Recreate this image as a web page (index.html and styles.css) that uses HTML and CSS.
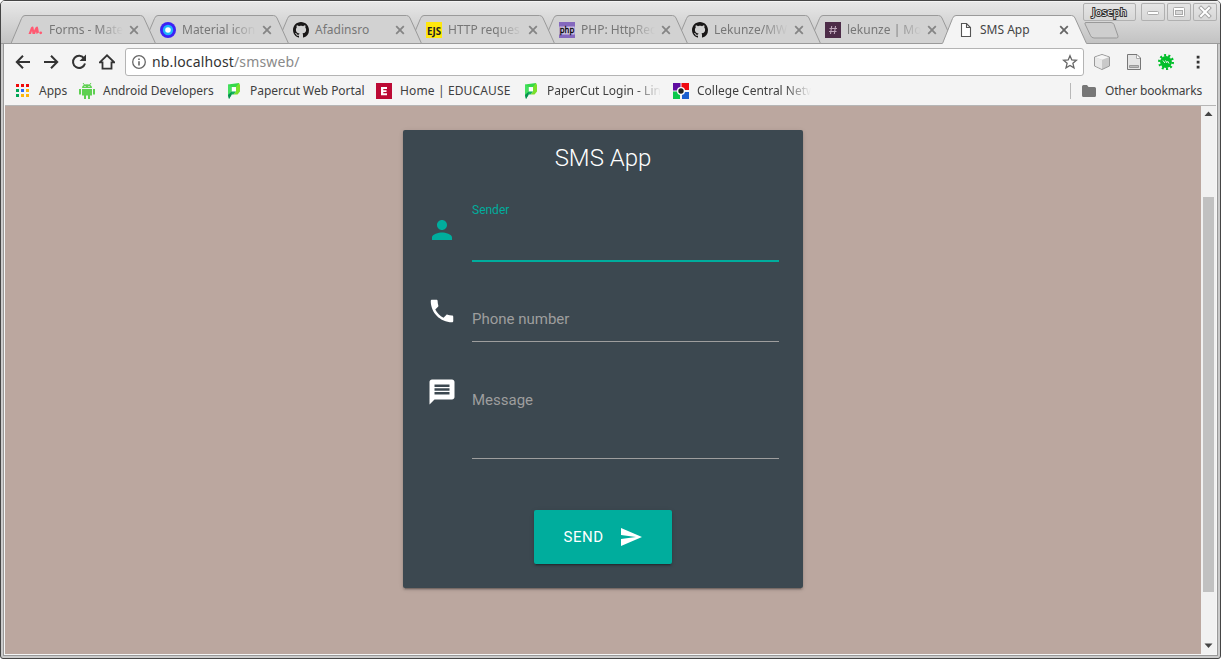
FILE: index.html
```html
<!DOCTYPE html>
<html lang="en">
<head>
<meta charset="utf-8">
<title>SMS App</title>
<link rel="stylesheet" href="styles.css">
</head>
<body>
<svg class="defs" width="0" height="0">
  <defs>
    <symbol id="tab" viewBox="0 0 146 29">
      <path d="M0 28.500L10.500 3.500Q11.500 .5 14 .5H129.500Q132 .5 133 3L144.500 28.500Z" fill="#d2d2d2" stroke="#9a9a9a"/>
    </symbol>
    <symbol id="tab-active" viewBox="0 0 146 29">
      <path d="M0 29L1 27.500 10.500 3.500Q11.500 .5 14 .5H129.500Q132 .5 133 3L144.500 28.500V29Z" fill="#f4f4f4"/>
      <path d="M.5 28.500L10.500 3.500Q11.500 .5 14 .5H129.500Q132 .5 133 3L144.500 28.500" fill="none" stroke="#9a9a9a"/>
    </symbol>
    <symbol id="close" viewBox="0 0 10 10">
      <path d="M1.200 1.200l7.600 7.600M8.800 1.200L1.200 8.800" fill="none" stroke="currentColor" stroke-width="1.800"/>
    </symbol>
    <symbol id="github" viewBox="0 0 16 16">
      <path fill="#191717" d="M8 0C3.580 0 0 3.580 0 8c0 3.540 2.290 6.530 5.470 7.590.4.070.55-.17.55-.38 0-.19-.01-.82-.01-1.490-2.010.37-2.530-.49-2.690-.94-.09-.23-.48-.94-.82-1.130-.28-.15-.68-.52-.01-.53.63-.01 1.080.58 1.230.82.72 1.210 1.870.87 2.330.66.070-.52.28-.87.51-1.070-1.780-.2-3.640-.89-3.640-3.950 0-.87.31-1.590.82-2.150-.08-.2-.36-1.020.080-2.120 0 0 .67-.21 2.200.82.640-.18 1.320-.27 2-.27s1.360.090 2 .27c1.530-1.040 2.200-.82 2.200-.82.440 1.100.16 1.920.080 2.120.51.560.82 1.270.82 2.150 0 3.070-1.870 3.750-3.650 3.950.29.250.54.730.54 1.480 0 1.070-.01 1.930-.01 2.200 0 .21.150.46.550.38A8.010 8.010 0 0 0 16 8c0-4.420-3.580-8-8-8z"/>
    </symbol>
    <symbol id="papercut" viewBox="0 0 14 16">
      <path d="M1 1.500L12 0V4L9 4H4.500V8.500L1 12Z" fill="#35d94a"/>
      <path d="M9 4L12 0 13 2V8.500L10.500 11.500H6.500L9 8.500Z" fill="#7be02a"/>
      <path d="M1 1.500L4.500 4V8.500L1 12Z" fill="#45e060"/>
      <path d="M1 12L4.500 8.500H9L6.500 11.500H4.500L2 16Z" fill="#12b45a"/>
      <path d="M1 12L4.500 9 4.500 12 2 16Z" fill="#07924e"/>
      <path d="M5 4.500H9V8H5Z" fill="#fff"/>
    </symbol>
  </defs>
</svg>

<div class="window">
  <header class="titlebar">
    <div class="tabs">
      <div class="tab">
        <svg class="shape"><use href="#tab"/></svg>
        <svg class="fav" viewBox="0 0 16 16"><path d="M1.500 12L4 5.500Q6 3.500 6.500 5.500L7 8.500 8.500 5.500Q10.500 3.500 11 5.500L12 10.500 9.500 12 9 9.500 8 12H5.500L5 9 4 12Z" fill="#ff5a72"/><circle cx="13.700" cy="10.800" r="1.400" fill="#ff5a72"/></svg>
        <span class="name">Forms - Mate</span>
        <svg class="x"><use href="#close"/></svg>
      </div>
      <div class="tab">
        <svg class="shape"><use href="#tab"/></svg>
        <svg class="fav" viewBox="0 0 16 16"><circle cx="8" cy="8" r="8" fill="#3d22f5"/><circle cx="8" cy="8" r="5.200" fill="#1fb5fb"/><circle cx="8" cy="8" r="2.800" fill="#fff"/></svg>
        <span class="name">Material icon</span>
        <svg class="x"><use href="#close"/></svg>
      </div>
      <div class="tab">
        <svg class="shape"><use href="#tab"/></svg>
        <svg class="fav"><use href="#github"/></svg>
        <span class="name">Afadinsro</span>
        <svg class="x"><use href="#close"/></svg>
      </div>
      <div class="tab">
        <svg class="shape"><use href="#tab"/></svg>
        <svg class="fav" viewBox="0 0 16 16"><path d="M0 0H16V16H0Z" fill="#ffe70d"/><text class="ejs" x="1" y="12.500" textLength="14" lengthAdjust="spacingAndGlyphs">EJS</text></svg>
        <span class="name">HTTP reques</span>
        <svg class="x"><use href="#close"/></svg>
      </div>
      <div class="tab">
        <svg class="shape"><use href="#tab"/></svg>
        <svg class="fav" viewBox="0 0 16 16"><path d="M0 0H16V16H0Z" fill="#8468bd"/><path d="M.3 4.500H15.700V12.500H.3Z" fill="#fff" opacity=".6"/><text class="php" x=".8" y="10.800" textLength="14.400" lengthAdjust="spacingAndGlyphs">php</text></svg>
        <span class="name">PHP: HttpRec</span>
        <svg class="x"><use href="#close"/></svg>
      </div>
      <div class="tab">
        <svg class="shape"><use href="#tab"/></svg>
        <svg class="fav"><use href="#github"/></svg>
        <span class="name">Lekunze/MW</span>
        <svg class="x"><use href="#close"/></svg>
      </div>
      <div class="tab">
        <svg class="shape"><use href="#tab"/></svg>
        <svg class="fav" viewBox="0 0 16 16"><path d="M0 0H16V16H0Z" fill="#4d2c48"/><path d="M6.700 4L5.500 12M10.500 4L9.300 12M4.500 6.500H12M4 9.500H11.500" stroke="#bda5b9" stroke-width="1.100"/></svg>
        <span class="name">lekunze | Mo</span>
        <svg class="x"><use href="#close"/></svg>
      </div>
      <div class="tab active">
        <svg class="shape"><use href="#tab-active"/></svg>
        <svg class="fav" viewBox="0 0 16 16"><path d="M3.500 1.500H8.500L12.500 5.500V14.500H3.500ZM8.500 1.500V5.500H12.500" fill="#fff" stroke="#555" stroke-width="1.100"/></svg>
        <span class="name">SMS App</span>
        <svg class="x"><use href="#close"/></svg>
      </div>
    </div>
    <svg class="newtab" viewBox="0 0 36 18"><path d="M2 .5H27Q29 .5 30 2.500L34 14Q34.500 16 32.500 16H10Q7.500 16 6.500 13.500L1 2Q.5.500 2 .5Z" fill="#cecece" stroke="#999"/></svg>
    <div class="controls">
      <span class="user">Joseph</span>
      <svg class="wbtn" viewBox="0 0 24 18"><rect x="6.500" y="8.500" width="11" height="3" rx="1" fill="#fff" stroke="#aaa"/></svg>
      <svg class="wbtn" viewBox="0 0 24 18"><rect x="6.500" y="4.500" width="11" height="9" rx="1" fill="#fff" stroke="#aaa"/><rect x="8.500" y="7.500" width="7" height="4" fill="#d8d8d8" stroke="#aaa"/></svg>
      <svg class="wbtn" viewBox="0 0 24 18"><path d="M8 5L16 13M16 5L8 13" stroke="#a5a5a5" stroke-width="4" stroke-linecap="square"/><path d="M8 5L16 13M16 5L8 13" stroke="#fff" stroke-width="2" stroke-linecap="square"/></svg>
    </div>
  </header>

  <div class="client">
    <div class="toolbar">
      <svg class="nav" viewBox="0 0 16 16"><path d="M15 8H2M8 1.800L1.800 8L8 14.200" fill="none" stroke="#333" stroke-width="2"/></svg>
      <svg class="nav" viewBox="0 0 16 16"><path d="M1 8H14M8 1.800L14.200 8L8 14.200" fill="none" stroke="#333" stroke-width="2"/></svg>
      <svg class="nav" viewBox="0 0 16 16"><path d="M13.200 4.500A6.100 6.100 0 1 0 14 9.500" fill="none" stroke="#333" stroke-width="2"/><path d="M15 .5V7H8.500Z" fill="#333"/></svg>
      <svg class="nav" viewBox="0 0 16 16"><path d="M.8 8.300L8 1.300L15.200 8.300H12.500V14.700H3.500V8.300Z" fill="none" stroke="#333" stroke-width="1.800"/></svg>
      <div class="omnibox">
        <svg class="info" viewBox="0 0 14 14"><circle cx="7" cy="7" r="6.300" fill="none" stroke="#666" stroke-width="1.300"/><path d="M6.200 6.200H7.800V10.500H6.200ZM6.200 3.500H7.800V5H6.200Z" fill="#666"/></svg>
        <span class="url">nb.localhost<span class="path">/smsweb/</span></span>
        <svg class="star" viewBox="0 0 16 16"><path d="M8 1.700L9.800 6L14.400 6.300L10.900 9.300L12 13.900L8 11.400L4 13.900L5.100 9.300L1.600 6.300L6.200 6Z" fill="none" stroke="#666" stroke-width="1.300"/></svg>
      </div>
      <div class="extensions">
        <svg viewBox="0 0 16 16"><path d="M8 .5L15.500 3V12L8 15.500L.5 12V3Z" fill="#c9c9c9" stroke="#999"/><path d="M1 3.300L8 6V15L1 11.700Z" fill="#e8e8e8"/><path d="M1.200 3.200L8 1L14.800 3.200L8 5.800Z" fill="#f6f6f6"/></svg>
        <svg viewBox="0 0 16 16"><path d="M1.500.5H11L14.500 4V15.500H1.500Z" fill="#e5e5e5" stroke="#777"/><path d="M10.500 1V4.500H14" fill="#fff" stroke="#aaa"/><path d="M3.500 11.500H12.500V13.500H3.500Z" fill="#bbb" stroke="#999"/></svg>
        <svg viewBox="0 0 16 16"><circle cx="8" cy="8" r="6.700" fill="none" stroke="#02bf2b" stroke-width="2.600" stroke-dasharray="2 2.210"/><circle cx="8" cy="8" r="5.900" fill="#02bf2b"/><path d="M5 6.500L7 9M7.500 6.500L9 9M9.500 7L11 9.500" stroke="#f4f4f4" stroke-width="1"/></svg>
        <svg viewBox="0 0 16 16"><path d="M6.700 1.800h2.800v2.800H6.700zM6.700 6.800h2.800v2.800H6.700zM6.700 11.800h2.800v2.800H6.700z" fill="#333"/></svg>
      </div>
    </div>

    <nav class="bookmarks">
      <a class="bm apps"><svg viewBox="0 0 16 16"><path d="M1 1h3v3H1zM6 1h3v3h-3zM11 1h3v3h-3z" fill="#f00a0a"/><path d="M1 6h3v3H1zM1 11h3v3H1z" fill="#00a657"/><path d="M6 6h3v3h-3z" fill="#2a6af5"/><path d="M11 6h3v3h-3zM6 11h3v3h-3zM11 11h3v3h-3z" fill="#fdb60a"/></svg><span>Apps</span></a>
      <a class="bm android"><svg viewBox="0 0 16 16"><path d="M3 5C3 2.500 5 1.300 8 1.300S13 2.500 13 5ZM3 6H13V12.500H11V16H9V12.500H7V16H5V12.500H3ZM0 6H2V11.500H0ZM14 6H16V11.500H14Z" fill="#5fd052"/><path d="M4 0L5.500 2M12 0L10.500 2" stroke="#5fd052"/><path d="M5.500 3h1v1h-1zM9.500 3h1v1h-1z" fill="#fff"/></svg><span>Android Developers</span></a>
      <a class="bm portal"><svg><use href="#papercut"/></svg><span>Papercut Web Portal</span></a>
      <a class="bm educause"><svg viewBox="0 0 16 16"><path d="M0 0H16V16H0Z" fill="#bc0a35"/><path d="M5 4H11V6H7.300V7.200H10.500V9H7.300V10.300H11V12.300H5Z" fill="#fff"/></svg><span>Home | EDUCAUSE</span></a>
      <a class="bm login"><svg><use href="#papercut"/></svg><span class="fade">PaperCut Login - Linu</span></a>
      <a class="bm college"><svg viewBox="0 0 16 16"><path d="M0 0H7.500V7.500H0Z" fill="#5f0ca0"/><path d="M8.500 0H16V7H8.500Z" fill="#f00a12"/><path d="M0 8.500H7V16H0Z" fill="#0ac84a"/><path d="M9 9H16V16H9Z" fill="#1a5fd0"/><circle cx="8" cy="8" r="4" fill="#fff"/><circle cx="8" cy="8" r="2.700" fill="#222"/></svg><span class="fade">College Central Netw</span></a>
      <a class="bm other"><svg viewBox="0 0 16 16"><path d="M1 3.500Q1 2 2.500 2H6L7.500 4H13.500Q15 4 15 5.500V12.500Q15 14 13.500 14H2.500Q1 14 1 12.500Z" fill="#777"/></svg><span>Other bookmarks</span></a>
    </nav>

    <div class="viewport">
      <main class="page">
        <form class="card">
          <h1 class="title">SMS App</h1>
          <div class="row sender">
            <svg class="prefix" viewBox="0 0 24 24"><path fill="currentColor" d="M12 12c2.210 0 4-1.790 4-4s-1.790-4-4-4-4 1.790-4 4 1.790 4 4 4zm0 2c-2.670 0-8 1.340-8 4v2h16v-2c0-2.660-5.330-4-8-4z"/></svg>
            <label class="field">Sender</label>
          </div>
          <div class="row phone">
            <svg class="prefix" viewBox="0 0 24 24"><path fill="currentColor" d="M6.620 10.790c1.440 2.830 3.760 5.140 6.590 6.590l2.200-2.200c.27-.27.67-.36 1.020-.24 1.120.37 2.330.57 3.570.57.550 0 1 .45 1 1V20c0 .55-.45 1-1 1-9.390 0-17-7.610-17-17 0-.55.45-1 1-1h3.500c.55 0 1 .45 1 1 0 1.250.2 2.450.57 3.570.11.35.030.74-.25 1.020l-2.200 2.200z"/></svg>
            <label class="field">Phone number</label>
          </div>
          <div class="row message">
            <svg class="prefix" viewBox="0 0 24 24"><path fill="currentColor" d="M20 2H4c-1.100 0-1.990.9-1.990 2L2 22l4-4h14c1.100 0 2-.9 2-2V4c0-1.100-.9-2-2-2zm-2 12H6v-2h12v2zm0-3H6V9h12v2zm0-3H6V6h12v2z"/></svg>
            <label class="field">Message</label>
          </div>
          <button class="send" type="button">SEND<svg viewBox="0 0 24 24"><path fill="currentColor" d="M2.010 21L23 12 2.010 3 2 10l15 2-15 2z"/></svg></button>
        </form>
      </main>
      <div class="scrollbar">
        <svg viewBox="0 0 15 17"><path d="M3.500 10L7.500 5.500L11.500 10Z" fill="#444"/></svg>
        <div class="track"><div class="thumb"></div></div>
        <svg viewBox="0 0 15 17"><path d="M3.500 6.500L7.500 11L11.500 6.500Z" fill="#444"/></svg>
      </div>
    </div>
  </div>
</div>
</body>
</html>
```

FILE: styles.css
```css
* { box-sizing: border-box; }
body { margin: 0; background: #fff; font-family: "Noto Sans", sans-serif; font-size: 12px; color: #444; overflow: hidden; }
svg { display: block; flex: none; }
.defs { position: absolute; }

.window {
  width: 1221px; height: 659px; display: flex; flex-direction: column;
  border: 1px solid #454545; border-radius: 5px 5px 3px 3px; overflow: hidden;
  background: #cbcbcb;
}

/* title bar and tabs */
.titlebar {
  height: 43px; flex: none; display: flex; padding-left: 10px;
  background: linear-gradient(#e8e8e8, #c2c2c2);
  box-shadow: inset 0 1px #f4f4f4, inset 0 -1px #9a9a9a;
}
.tabs { display: flex; padding-top: 14px; isolation: isolate; }
.tab {
  position: relative; width: 146px; height: 29px; margin-right: -13px;
  display: flex; align-items: center; padding: 0 0 0 16px; color: #777; white-space: nowrap;
}
.tab:nth-child(1) { z-index: 8; }
.tab:nth-child(2) { z-index: 7; }
.tab:nth-child(3) { z-index: 6; }
.tab:nth-child(4) { z-index: 5; }
.tab:nth-child(5) { z-index: 4; }
.tab:nth-child(6) { z-index: 3; }
.tab:nth-child(7) { z-index: 2; }
.tab.active { z-index: 9; color: #444; }
.shape { position: absolute; inset: 0; width: 146px; height: 29px; z-index: -1; }
.fav { width: 16px; height: 16px; margin-top: 1px; overflow: visible; }
.name {
  width: 74px; margin: 0 6px 0 6px; line-height: 18px;
  -webkit-mask-image: linear-gradient(90deg, #000 48px, transparent 74px);
  mask-image: linear-gradient(90deg, #000 48px, transparent 74px);
}
.tab:nth-child(3) .name, .active .name { -webkit-mask-image: none; mask-image: none; }
.x { width: 10px; height: 10px; margin-top: 1px; color: #858585; }
.active .x { color: #666; margin-left: -1px; }
.ejs { font: bold 11px "Open Sans", sans-serif; fill: #222; }
.php { font: 9px "DejaVu Sans", sans-serif; fill: #000; stroke: #000; stroke-width: .3px; }
.newtab { width: 36px; height: 18px; margin: 21px 0 0 9px; }
.controls { display: flex; gap: 2px; height: 19px; margin: 2px 0 0 -37px; position: relative; }
.user {
  width: 53px; height: 18px; margin-right: 3px; border: 1px solid #b0b0b0; border-radius: 2px;
  text-align: center; line-height: 16px; font-size: 11px; color: #eee;
  -webkit-text-stroke: 2px #333; paint-order: stroke fill;
}
.wbtn { width: 24px; height: 18px; border-radius: 2px; box-shadow: inset 0 0 0 1px #b0b0b0; }

/* browser chrome */
.client {
  flex: 1; min-height: 0; margin: 0 2px 2px; display: flex; flex-direction: column;
  border: 1px solid #999; border-top: 0; padding: 0 1px 1px; background: #f6f6f6;
}
.toolbar { height: 34px; flex: none; display: flex; align-items: center; padding: 0 9px 0 10px; gap: 12px; background: #f4f4f4; }
.nav { width: 16px; height: 16px; margin-top: 1px; }
.omnibox {
  width: 959px; height: 28px; margin: 2px 0 0 -2px; display: flex; align-items: center;
  padding: 0 5px 0 6px; border: 1px solid #b4b4b4; border-radius: 3px; background: #fff;
}
.info { width: 14px; height: 14px; }
.url { flex: 1; margin-left: 6px; font-size: 14px; letter-spacing: .15px; color: #333; line-height: 20px; margin-top: -1px; }
.path { color: #8a8a8a; }
.star { width: 16px; height: 16px; }
.extensions { display: flex; gap: 16px; margin: 1px 0 0 -2px; }
.extensions svg { width: 16px; height: 16px; }
.bookmarks { height: 28px; flex: none; display: flex; align-items: center; background: #f4f4f4; border-bottom: 1px solid #b6b6b6; padding: 0 14px 1px 10px; color: #3f3f3f; }
.bm { display: flex; align-items: center; gap: 8px; white-space: nowrap; line-height: 18px; }
.bm svg { width: 16px; height: 16px; }
.apps { width: 64px; }
.android { width: 147px; letter-spacing: -.04px; }
.portal { width: 150px; letter-spacing: -.04px; }
.educause { width: 147px; letter-spacing: .13px; }
.login { width: 150px; }
.college { width: 137px; }
.fade { flex: 0 0 116px; -webkit-mask-image: linear-gradient(90deg, #000 88px, transparent 114px); mask-image: linear-gradient(90deg, #000 88px, transparent 114px); }
.other { margin-left: auto; border-left: 1px solid #b8b8b8; padding-left: 10px; height: 16px; letter-spacing: -.15px; }

/* page */
.viewport { flex: 1; min-height: 0; display: flex; }
.page { flex: 1; background: #bba79f; padding-top: 24px; padding-left: 398px; font-family: Roboto, sans-serif; }
.card {
  width: 400px; height: 458px; background: #3c4850; border-radius: 2px; padding: 0 24px; color: #fff;
  display: flex; flex-direction: column;
  box-shadow: 0 2px 2px rgba(0,0,0,.14), 0 1px 5px rgba(0,0,0,.12), 0 3px 1px -2px rgba(0,0,0,.2);
}
.title { margin: 0; height: 70px; padding-top: 13px; text-align: center; font-size: 24px; line-height: 30px; font-weight: 300; }
.row { display: flex; gap: 15px; }
.prefix { width: 30px; height: 30px; margin-top: 15px; }
.field { width: 307px; border-bottom: 1px solid #9e9e9e; color: #9e9e9e; font-size: 15px; line-height: 20px; }
.sender { height: 62px; color: #00ad9d; }
.sender .field { color: inherit; border-bottom: 2px solid #00ad9d; font-size: 12px; }
.phone { height: 61px; margin-top: 19px; }
.phone .field { padding-top: 28px; }
.message { height: 98px; margin-top: 19px; }
.message .prefix { margin-top: 15.5px; }
.message .field { padding-top: 29px; }
.send {
  width: 138px; height: 54px; margin: 51px 0 0 107px; padding: 0 0 0 1px;
  display: flex; align-items: center; justify-content: center; gap: 16px;
  border: 0; border-radius: 2px; background: #00ad9d; color: #fff;
  font: 15px Roboto, sans-serif; letter-spacing: .5px;
  box-shadow: 0 2px 2px rgba(0,0,0,.14), 0 1px 5px rgba(0,0,0,.12), 0 3px 1px -2px rgba(0,0,0,.2);
}
.send svg { width: 24px; height: 24px; }

.scrollbar { width: 15px; background: #f1f1f1; display: flex; flex-direction: column; }
.scrollbar svg { width: 15px; height: 17px; }
.track { flex: 1; padding: 74px 2px 0; }
.thumb { height: 395px; background: #c1c1c1; }
```
